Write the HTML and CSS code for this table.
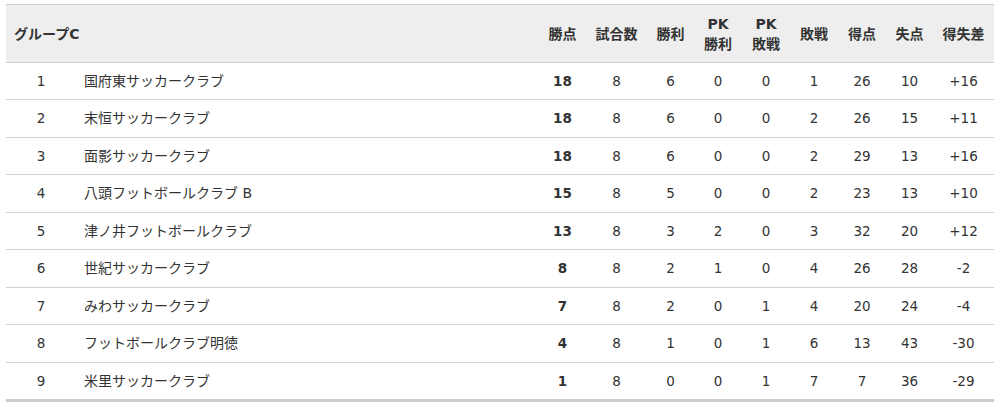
FILE: index.html
```html
<!DOCTYPE html>
<html lang="ja">
<head>
<meta charset="utf-8">
<title>グループC</title>
<link rel="stylesheet" href="styles.css">
</head>
<body>
<table class="standings">
  <colgroup>
    <col class="c-rank">
    <col class="c-name">
    <col class="c-w47">
    <col class="c-w61">
    <col class="c-w47">
    <col class="c-w48">
    <col class="c-w48">
    <col class="c-w48">
    <col class="c-w48">
    <col class="c-w47">
    <col class="c-w61">
  </colgroup>
  <thead>
    <tr>
      <th class="group" colspan="2">グループC</th>
      <th>勝点</th>
      <th>試合数</th>
      <th>勝利</th>
      <th>PK<br>勝利</th>
      <th>PK<br>敗戦</th>
      <th>敗戦</th>
      <th>得点</th>
      <th>失点</th>
      <th>得失差</th>
    </tr>
  </thead>
  <tbody>
    <tr><td>1</td><td class="name">国府東サッカークラブ</td><td class="pts">18</td><td>8</td><td>6</td><td>0</td><td>0</td><td>1</td><td>26</td><td>10</td><td>+16</td></tr>
    <tr><td>2</td><td class="name">末恒サッカークラブ</td><td class="pts">18</td><td>8</td><td>6</td><td>0</td><td>0</td><td>2</td><td>26</td><td>15</td><td>+11</td></tr>
    <tr><td>3</td><td class="name">面影サッカークラブ</td><td class="pts">18</td><td>8</td><td>6</td><td>0</td><td>0</td><td>2</td><td>29</td><td>13</td><td>+16</td></tr>
    <tr><td>4</td><td class="name">八頭フットボールクラブ B</td><td class="pts">15</td><td>8</td><td>5</td><td>0</td><td>0</td><td>2</td><td>23</td><td>13</td><td>+10</td></tr>
    <tr><td>5</td><td class="name">津ノ井フットボールクラブ</td><td class="pts">13</td><td>8</td><td>3</td><td>2</td><td>0</td><td>3</td><td>32</td><td>20</td><td>+12</td></tr>
    <tr><td>6</td><td class="name">世紀サッカークラブ</td><td class="pts">8</td><td>8</td><td>2</td><td>1</td><td>0</td><td>4</td><td>26</td><td>28</td><td>-2</td></tr>
    <tr><td>7</td><td class="name">みわサッカークラブ</td><td class="pts">7</td><td>8</td><td>2</td><td>0</td><td>1</td><td>4</td><td>20</td><td>24</td><td>-4</td></tr>
    <tr><td>8</td><td class="name">フットボールクラブ明徳</td><td class="pts">4</td><td>8</td><td>1</td><td>0</td><td>1</td><td>6</td><td>13</td><td>43</td><td>-30</td></tr>
    <tr class="last"><td>9</td><td class="name">米里サッカークラブ</td><td class="pts">1</td><td>8</td><td>0</td><td>0</td><td>1</td><td>7</td><td>7</td><td>36</td><td>-29</td></tr>
  </tbody>
</table>
</body>
</html>
```
FILE: styles.css
```css
html, body {
  margin: 0;
  padding: 0;
  background: #ffffff;
}

body {
  padding: 4px 0 0 6px;
  font-family: "DejaVu Sans", "Noto Sans CJK JP", sans-serif;
  font-size: 14px;
  color: #333333;
}

.standings {
  width: 988px;
  table-layout: fixed;
  border-collapse: separate;
  border-spacing: 0;
}

.c-rank { width: 70px; }
.c-w47 { width: 47px; }
.c-w48 { width: 48px; }
.c-w61 { width: 61px; }

.standings th {
  background: #eeeeee;
  border-top: 1px solid #cccccc;
  border-bottom: 1px solid #cccccc;
  height: 57px;
  padding: 0;
  font-weight: bold;
  font-size: 14px;
  line-height: 20px;
  text-align: center;
  vertical-align: middle;
  color: #333333;
}

.standings th.group {
  text-align: left;
  padding-left: 8px;
}

.standings td {
  border-bottom: 1px solid #d0d0d0;
  padding: 8px 0;
  line-height: 20.44px;
  text-align: center;
  vertical-align: middle;
  font-size: 13.5px;
}

.standings td.name {
  text-align: left;
  padding-left: 8px;
  font-size: 14px;
}

.standings td.pts {
  font-weight: bold;
}

.standings tr.last td {
  border-bottom: 3px solid #cccccc;
}
```
